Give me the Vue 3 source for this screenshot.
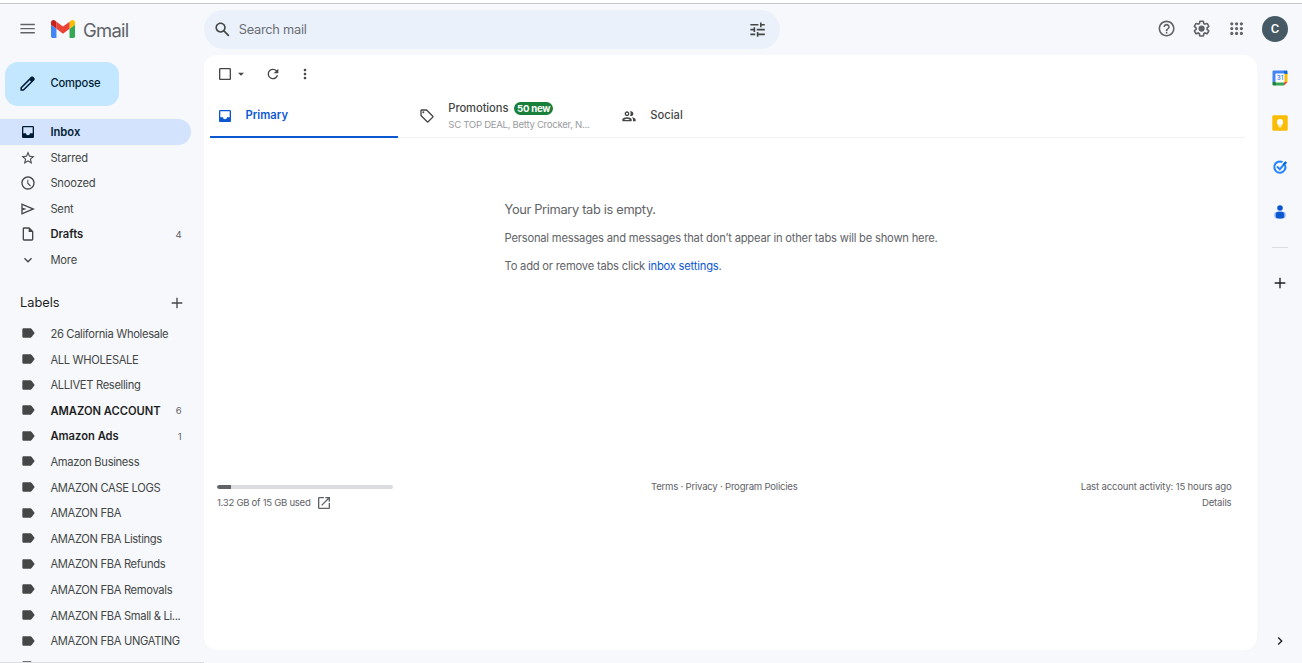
<script setup>
const icons = {
  menu: 'M3 18h18v-1.7H3v1.7zm0-5.2h18v-1.6H3v1.6zM3 6v1.7h18V6H3z',
  pencil: 'M20.41 4.94l-1.35-1.35c-.78-.78-2.05-.78-2.83 0L3 16.82V21h4.18L20.41 7.77c.79-.78.79-2.05 0-2.83zm-14 14.12L5 19v-1.36l9.82-9.82 1.41 1.41-9.82 9.83z',
  inbox: 'M19 3H5c-1.1 0-2 .9-2 2v14c0 1.1.9 2 2 2h14c1.1 0 2-.9 2-2V5c0-1.1-.9-2-2-2zm0 11h-4c0 1.66-1.35 3-3 3s-3-1.34-3-3H5V5h14v9z',
  star: 'M22 9.24l-7.19-.62L12 2 9.19 8.63 2 9.24l5.46 4.73L5.82 21 12 17.27 18.18 21l-1.63-7.03L22 9.24zM12 15.4l-3.76 2.27 1-4.28-3.32-2.88 4.38-.38L12 6.1l1.71 4.04 4.38.38-3.32 2.88 1 4.28L12 15.4z',
  clock: 'M11.99 2C6.47 2 2 6.48 2 12s4.47 10 9.99 10C17.52 22 22 17.52 22 12S17.52 2 11.99 2zM12 20c-4.42 0-8-3.58-8-8s3.58-8 8-8 8 3.58 8 8-3.58 8-8 8zm.5-13H11v6l4.3 4.2 1.2-1.2-4-4V7z',
  send: 'M2 3.5v17L22.5 12 2 3.5zm2 3L17.2 12 4 17.5v-3.7l6-1.8-6-1.8V6.5z',
  draft: 'M14 2H6c-1.1 0-2 .9-2 2v16c0 1.1.9 2 2 2h12c1.1 0 2-.9 2-2V8l-6-6zM6 20V4h7v5h5v11H6z',
  more: 'M16.59 8.59L12 13.17 7.41 8.59 6 10l6 6 6-6z',
  label: 'M3.5 17.8c0 .8.6 1.2 1.5 1.2h10.5c.8 0 1.5-.4 2-1.1L22 12l-4.5-5.9c-.5-.7-1.2-1.1-2-1.1H5c-.9 0-1.5.4-1.5 1.2v11.6z',
  plus: 'M20 13h-7v7h-2v-7H4v-2h7V4h2v7h7v2z',
  search: 'M20.49 19l-5.73-5.73C15.53 12.2 16 10.91 16 9.5 16 5.91 13.09 3 9.5 3S3 5.91 3 9.5 5.91 16 9.5 16c1.41 0 2.7-.47 3.77-1.24L19 20.49 20.49 19zM5 9.5C5 7.01 7.01 5 9.5 5S14 7.01 14 9.5 11.99 14 9.5 14 5 11.99 5 9.5z',
  tune: 'M3 17v2h6v-2H3zM3 5v2h10V5H3zm10 16v-2h8v-2h-8v-2h-2v6h2zM7 9v2H3v2h4v2h2V9H7zm14 4v-2H11v2h10zm-6-4h2V7h4V5h-4V3h-2v6z',
  help: 'M11 18h2v-2h-2v2zm1-16C6.48 2 2 6.48 2 12s4.48 10 10 10 10-4.48 10-10S17.52 2 12 2zm0 18c-4.41 0-8-3.59-8-8s3.59-8 8-8 8 3.59 8 8-3.59 8-8 8zm0-14c-2.21 0-4 1.79-4 4h2c0-1.1.9-2 2-2s2 .9 2 2c0 2-3 1.75-3 5h2c0-2.25 3-2.5 3-5 0-2.21-1.79-4-4-4z',
  gear: 'M13.85 22.25h-3.7c-.74 0-1.36-.54-1.45-1.27l-.27-1.89c-.27-.14-.53-.29-.79-.46l-1.8.72c-.7.26-1.47-.03-1.81-.65L2.2 15.53c-.35-.66-.2-1.44.36-1.88l1.53-1.19c-.01-.15-.02-.3-.02-.46 0-.15.01-.31.02-.46l-1.52-1.19c-.59-.45-.74-1.26-.37-1.88l1.85-3.19c.34-.62 1.11-.9 1.79-.63l1.81.73c.26-.17.52-.32.78-.46l.27-1.91c.09-.7.71-1.25 1.44-1.25h3.7c.74 0 1.36.54 1.45 1.27l.27 1.89c.27.14.53.29.79.46l1.8-.72c.71-.26 1.48.03 1.82.65l1.84 3.18c.36.66.2 1.44-.36 1.88l-1.52 1.19c.01.15.02.3.02.46s-.01.31-.02.46l1.52 1.19c.56.45.72 1.23.37 1.86l-1.86 3.22c-.34.62-1.11.9-1.8.63l-1.8-.72c-.26.17-.52.32-.78.46l-.27 1.91c-.1.68-.72 1.22-1.46 1.22zm-3.23-2h2.76l.37-2.55.53-.22c.44-.18.88-.44 1.34-.78l.45-.34 2.38.96 1.38-2.4-2.03-1.58.07-.56c.03-.26.06-.51.06-.78s-.03-.53-.06-.78l-.07-.56 2.03-1.58-1.39-2.4-2.39.96-.45-.35c-.42-.32-.87-.58-1.33-.77l-.52-.22-.37-2.55h-2.76l-.37 2.55-.53.21c-.44.19-.88.44-1.34.79l-.45.33-2.38-.95-1.39 2.39 2.03 1.58-.07.56a7 7 0 0 0-.06.79c0 .26.02.53.06.78l.07.56-2.03 1.58 1.38 2.4 2.39-.96.45.35c.43.33.86.58 1.33.77l.53.22.38 2.55z M15.9 12a3.9 3.9 0 1 1-7.8 0 3.9 3.9 0 0 1 7.8 0z',
  apps: 'M6 8c1.1 0 2-.9 2-2s-.9-2-2-2-2 .9-2 2 .9 2 2 2zm6 12c1.1 0 2-.9 2-2s-.9-2-2-2-2 .9-2 2 .9 2 2 2zm-6 0c1.1 0 2-.9 2-2s-.9-2-2-2-2 .9-2 2 .9 2 2 2zm0-6c1.1 0 2-.9 2-2s-.9-2-2-2-2 .9-2 2 .9 2 2 2zm6 0c1.1 0 2-.9 2-2s-.9-2-2-2-2 .9-2 2 .9 2 2 2zm4-8c0 1.1.9 2 2 2s2-.9 2-2-.9-2-2-2-2 .9-2 2zm-4 2c1.1 0 2-.9 2-2s-.9-2-2-2-2 .9-2 2 .9 2 2 2zm6 6c1.1 0 2-.9 2-2s-.9-2-2-2-2 .9-2 2 .9 2 2 2zm0 6c1.1 0 2-.9 2-2s-.9-2-2-2-2 .9-2 2 .9 2 2 2z',
  checkbox: 'M19 5v14H5V5h14m0-2H5c-1.1 0-2 .9-2 2v14c0 1.1.9 2 2 2h14c1.1 0 2-.9 2-2V5c0-1.1-.9-2-2-2z',
  caret: 'M7.5 10l4.5 4.5 4.5-4.5z',
  refresh: 'M17.65 6.35A7.96 7.96 0 0 0 12 4a8 8 0 1 0 7.73 10h-2.08A6 6 0 1 1 12 6c1.66 0 3.14.69 4.22 1.78L13 11h7V4l-2.35 2.35z',
  dots: 'M12 8c1.1 0 2-.9 2-2s-.9-2-2-2-2 .9-2 2 .9 2 2 2zm0 2c-1.1 0-2 .9-2 2s.9 2 2 2 2-.9 2-2-.9-2-2-2zm0 6c-1.1 0-2 .9-2 2s.9 2 2 2 2-.9 2-2-.9-2-2-2z',
  tag: 'M21.41 11.58l-9-9C12.05 2.22 11.55 2 11 2H4c-1.1 0-2 .9-2 2v7c0 .55.22 1.05.59 1.42l9 9c.36.36.86.58 1.41.58s1.05-.22 1.41-.59l7-7c.37-.36.59-.86.59-1.41s-.23-1.06-.59-1.42zM13 20.01L4 11V4h7v-.01l9 9-7 7.02zM8 6.5A1.5 1.5 0 1 1 5 6.5 1.5 1.5 0 0 1 8 6.5z',
  people: 'M9 13.75c-2.34 0-7 1.17-7 3.5V20h14v-2.75c0-2.33-4.66-3.5-7-3.5zM4.34 18c.84-.8 2.87-2 4.66-2s3.82 1.2 4.66 2H4.34zM9 12c1.93 0 3.5-1.57 3.5-3.5S10.93 5 9 5 5.5 6.57 5.5 8.5 7.07 12 9 12zm0-5c.83 0 1.5.67 1.5 1.5S9.83 10 9 10s-1.5-.67-1.5-1.5S8.17 7 9 7zm7.04 6.81c1.16.84 1.96 1.96 1.96 3.44V20h4v-2.75c0-2.02-3.5-3.17-5.96-3.44zM15 12c1.93 0 3.5-1.57 3.5-3.5S16.93 5 15 5c-.54 0-1.04.13-1.5.35.63.89 1 1.98 1 3.15s-.37 2.26-1 3.15c.46.22.96.35 1.5.35z',
  open: 'M19 19H5V5h7V3H5a2 2 0 0 0-2 2v14a2 2 0 0 0 2 2h14c1.1 0 2-.9 2-2v-7h-2v7zM14 3v2h3.59l-9.83 9.83 1.41 1.41L19 6.41V10h2V3h-7z',
  chevron: 'M10 6L8.59 7.41 13.17 12l-4.58 4.59L10 18l6-6z',
}

const folders = [
  { name: 'Inbox', icon: 'inbox', kind: 'active' },
  { name: 'Starred', icon: 'star' },
  { name: 'Snoozed', icon: 'clock' },
  { name: 'Sent', icon: 'send' },
  { name: 'Drafts', icon: 'draft', kind: 'unread', count: 4 },
  { name: 'More', icon: 'more' },
]

const labels = [
  { name: '26 California Wholesale' },
  { name: 'ALL WHOLESALE' },
  { name: 'ALLIVET Reselling' },
  { name: 'AMAZON ACCOUNT', kind: 'unread', count: 6 },
  { name: 'Amazon Ads', kind: 'unread', count: 1 },
  { name: 'Amazon Business' },
  { name: 'AMAZON CASE LOGS' },
  { name: 'AMAZON FBA' },
  { name: 'AMAZON FBA Listings' },
  { name: 'AMAZON FBA Refunds' },
  { name: 'AMAZON FBA Removals' },
  { name: 'AMAZON FBA Small & Li...' },
  { name: 'AMAZON FBA UNGATING' },
  { name: 'Amazon Seller' },
]
</script>

<template>
  <div class="page">
    <header class="header">
      <div class="brand">
        <svg class="menu" viewBox="0 0 24 24"><path :d="icons.menu" /></svg>
        <svg class="logo" viewBox="52 42 88 66">
          <path fill="#4285f4" d="M58 108h14V74L52 59v43c0 3.32 2.69 6 6 6" />
          <path fill="#34a853" d="M120 108h14c3.32 0 6-2.69 6-6V59l-20 15" />
          <path fill="#fbbc04" d="M120 48v26l20-15v-8c0-7.42-8.47-11.65-14.4-7.2" />
          <path fill="#ea4335" d="M72 74V48l24 18 24-18v26L96 92" />
          <path fill="#c5221f" d="M52 51v8l20 15V48l-5.6-4.2c-5.94-4.45-14.4-.22-14.4 7.2" />
        </svg>
        <span class="wordmark">Gmail</span>
      </div>
      <div class="search">
        <svg class="i19" viewBox="0 0 24 24"><path :d="icons.search" /></svg>
        <span class="placeholder">Search mail</span>
        <svg class="i19" viewBox="0 0 24 24"><path :d="icons.tune" /></svg>
      </div>
      <div class="account">
        <svg class="i19" viewBox="0 0 24 24"><path :d="icons.help" /></svg>
        <svg class="i19" viewBox="0 0 24 24"><path :d="icons.gear" /></svg>
        <svg class="i19" viewBox="0 0 24 24"><path :d="icons.apps" /></svg>
        <div class="avatar">C</div>
      </div>
    </header>

    <div class="body">
      <nav class="sidebar">
        <button class="compose">
          <svg class="i19" viewBox="0 0 24 24"><path :d="icons.pencil" /></svg>
          <span>Compose</span>
        </button>
        <div v-for="f in folders" :key="f.name" class="row" :class="f.kind">
          <svg class="i16" viewBox="0 0 24 24"><path :d="icons[f.icon]" /></svg>
          <span class="name">{{ f.name }}</span>
          <span v-if="f.count" class="count">{{ f.count }}</span>
        </div>
        <div class="labels-head">
          <span>Labels</span>
          <svg class="i16" viewBox="0 0 24 24"><path :d="icons.plus" /></svg>
        </div>
        <div v-for="l in labels" :key="l.name" class="row label" :class="l.kind">
          <svg class="i16" viewBox="0 0 24 24"><path :d="icons.label" /></svg>
          <span class="name">{{ l.name }}</span>
          <span v-if="l.count" class="count">{{ l.count }}</span>
        </div>
      </nav>

      <main class="panel">
        <div class="toolbar">
          <svg class="i16" viewBox="0 0 24 24"><path :d="icons.checkbox" /></svg>
          <svg class="i16 caret" viewBox="0 0 24 24"><path :d="icons.caret" /></svg>
          <svg class="i16 refresh" viewBox="0 0 24 24"><path :d="icons.refresh" /></svg>
          <svg class="i16 dots" viewBox="0 0 24 24"><path :d="icons.dots" /></svg>
        </div>
        <div class="tabs">
          <div class="tab primary">
            <svg class="i16" viewBox="0 0 24 24"><path :d="icons.inbox" /></svg>
            <span class="title">Primary</span>
          </div>
          <div class="tab promos">
            <svg class="i16" viewBox="0 0 24 24"><path :d="icons.tag" /></svg>
            <div class="stack">
              <div class="line"><span class="title">Promotions</span><span class="badge">50 new</span></div>
              <div class="senders">SC TOP DEAL, Betty Crocker, N...</div>
            </div>
          </div>
          <div class="tab social">
            <svg class="i16" viewBox="0 0 24 24"><path :d="icons.people" /></svg>
            <span class="title">Social</span>
          </div>
        </div>
        <section class="empty">
          <h2>Your Primary tab is empty.</h2>
          <p>Personal messages and messages that don’t appear in other tabs will be shown here.</p>
          <p>To add or remove tabs click <a>inbox settings</a>.</p>
        </section>
        <footer class="footer">
          <div>
            <div class="meter"><div class="used"></div></div>
            <div class="quota"><span>1.32 GB of 15 GB used</span><svg class="i16" viewBox="0 0 24 24"><path :d="icons.open" /></svg></div>
          </div>
          <div class="legal">Terms · Privacy · Program Policies</div>
          <div class="activity"><div>Last account activity: 15 hours ago</div><div>Details</div></div>
        </footer>
      </main>

      <aside class="rail">
        <svg class="app" viewBox="0 0 16 16">
          <path fill="#4285f4" d="M1.5.5H12V4H4v8H.5V1.5a1 1 0 0 1 1-1z" />
          <path fill="#1967d2" d="M12 .5h2.5a1 1 0 0 1 1 1V4H12z" />
          <path fill="#fbbc04" d="M12 4h3.5v8H12z" />
          <path fill="#34a853" d="M4 12h8v3.5H4z" />
          <path fill="#188038" d="M.5 12H4v3.5H1.5a1 1 0 0 1-1-1z" />
          <path fill="#ea4335" d="M12 12h3.5L12 15.5z" />
          <path fill="#fff" d="M3.5 3.5h9v9h-9z" />
          <text x="8" y="10.4" text-anchor="middle" fill="#4285f4" font-size="6.3" font-weight="600">31</text>
        </svg>
        <svg class="app" viewBox="0 0 16 16">
          <rect x=".3" y=".3" width="15.4" height="15.4" rx="1.4" fill="#fbbc04" />
          <circle cx="8" cy="7.2" r="3.1" fill="#fff" />
          <path fill="#fff" d="M6.4 8h3.2v2.6H6.4zM6.4 11.3h3.2v1H6.4z" />
        </svg>
        <svg class="app" viewBox="0 0 16 16">
          <path d="M13.1 6a5.6 5.6 0 1 1-2.6-2.9" fill="none" stroke="#2684fc" stroke-width="2" />
          <path d="M5 7.6l2.8 2.6 6.2-7" fill="none" stroke="#2684fc" stroke-width="2" />
          <path d="M11.4 6l2.7-3" fill="none" stroke="#0066da" stroke-width="2.3" />
        </svg>
        <svg class="app" viewBox="0 0 16 16">
          <circle cx="8" cy="4" r="2.8" fill="#0b57d0" />
          <rect x="2.4" y="7.8" width="11.2" height="6.8" rx="3" fill="#7baaf7" />
          <rect x="4" y="7.8" width="8" height="6.8" rx="2.4" fill="#0b57d0" />
        </svg>
        <div class="divider"></div>
        <svg class="app add" viewBox="0 0 24 24"><path :d="icons.plus" /></svg>
        <svg class="app collapse" viewBox="0 0 24 24"><path :d="icons.chevron" /></svg>
      </aside>
    </div>
  </div>
</template>

<style>
body { margin: 0; background: #f6f8fc; }
</style>

<style scoped>
.page {
  box-sizing: border-box;
  width: 1302px;
  height: 663px;
  overflow: hidden;
  display: flex;
  flex-direction: column;
  border-top: 3px solid #fff;
  background: #f6f8fc;
  color: #444746;
  font: 11.2px/1 Inter, "Liberation Sans", sans-serif;
}
svg { display: block; flex: none; fill: currentColor; }
.i16 { width: 16px; height: 16px; }
.i19 { width: 19.2px; height: 19.2px; }

.header {
  box-sizing: border-box;
  height: 52px;
  flex: none;
  border-top: 1px solid #c7c8cc;
  display: flex;
  align-items: center;
}
.brand { width: 204px; padding-bottom: 1px; display: flex; align-items: center; color: #5f6368; }
.menu { width: 19.2px; height: 19.2px; margin-left: 17.8px; }
.logo { width: 24px; height: 18px; margin-left: 14px; }
.wordmark { margin-left: 8px; font-size: 18.4px; letter-spacing: -0.7px; padding-top: 2px; }
.search {
  box-sizing: border-box;
  width: 576px;
  height: 39px;
  border-radius: 20px;
  padding: 0 13px 0 9px;
  background: #eaf1fb;
  display: flex;
  align-items: center;
}
.placeholder { flex: 1; margin-left: 6.5px; padding-top: 2px; font-size: 12.8px; letter-spacing: -0.25px; color: #6a6e73; }
.account { margin-left: auto; padding: 0 14px 1px 0; display: flex; align-items: center; gap: 15.8px; color: #5f6368; }
.avatar {
  width: 26px;
  height: 26px;
  border-radius: 50%;
  background: #455a64;
  color: #fff;
  font: 500 13px/26px Roboto, sans-serif;
  text-align: center;
}

.body { flex: 1; min-height: 0; display: flex; }
.sidebar {
  box-sizing: border-box;
  width: 204px;
  height: 608px;
  overflow: hidden;
  padding-top: 7px;
  border-bottom: 1px solid #dcdde3;
}
.compose {
  width: 114px;
  height: 44px;
  margin: 0 0 13.2px 5px;
  padding: 0 0 0 13px;
  border: 0;
  border-radius: 13px;
  background: #c2e7ff;
  color: #001d35;
  display: flex;
  align-items: center;
  gap: 13.2px;
  font: 500 11.2px/1 Inter, sans-serif;
  letter-spacing: -0.15px;
}
.row {
  box-sizing: border-box;
  width: 191px;
  height: 25.6px;
  padding: 0 9.4px 0 20px;
  border-radius: 0 13px 13px 0;
  display: flex;
  align-items: center;
}
.name { flex: 1; margin-left: 14.4px; padding-top: 1.4px; white-space: nowrap; letter-spacing: -0.2px; }
.label .name { letter-spacing: -0.33px; }
.label svg { margin-top: -1px; }
.count { font-size: 9.6px; color: #5f6368; }
.active { background: #d3e3fd; color: #001d35; }
.active .name { font-weight: 600; letter-spacing: 0; }
.unread .name { font-weight: 600; letter-spacing: 0; color: #1f1f1f; }
.labels-head {
  box-sizing: border-box;
  height: 48.4px;
  padding: 12px 19px 0 20px;
  display: flex;
  align-items: center;
  justify-content: space-between;
  font-size: 12.8px;
  color: #1f1f1f;
}
.labels-head svg { color: #444746; }

.panel {
  width: 1053px;
  height: 595px;
  border-radius: 13px;
  background: #fff;
}
.toolbar { height: 38px; padding-left: 13px; display: flex; align-items: center; }
.refresh { margin-left: 16px; }
.dots { margin-left: 16px; }
.tabs {
  box-sizing: border-box;
  height: 45px;
  margin: 0 12px 0 6px;
  border-bottom: 1px solid #f0f1f2;
  display: flex;
}
.tab { box-sizing: border-box; height: 45px; display: flex; align-items: center; padding-left: 7px; gap: 13.3px; }
.title { font-weight: 500; }
.primary { width: 188px; gap: 12.6px; color: #0b57d0; border-bottom: 2px solid #0b57d0; padding-top: 2px; }
.primary .title { font-weight: 600; }
.promos { margin-left: 14px; width: 202px; }
.line { display: flex; align-items: center; gap: 5.5px; height: 14px; }
.promos .title { letter-spacing: -0.08px; }
.badge { padding: 0 3.2px; height: 13px; line-height: 13px; border-radius: 7px; background: #188038; color: #fff; font-size: 9.6px; font-weight: 700; letter-spacing: -0.25px; }
.senders { margin-top: 4px; font-size: 9.6px; letter-spacing: -0.3px; color: #9a9c9f; white-space: nowrap; }

.empty { height: 341px; padding: 65px 0 0 300.5px; box-sizing: border-box; color: #5f6368; }
h2 { margin: 0 0 16px; font-size: 12.8px; line-height: 13px; font-weight: 400; letter-spacing: -0.32px; }
p { margin: 0 0 16px; line-height: 12px; letter-spacing: -0.21px; }
a { color: #0b57d0; }

.footer { display: grid; grid-template-columns: 1fr auto 1fr; padding: 0 25.5px 0 13px; font-size: 9.6px; line-height: 16px; letter-spacing: -0.23px; color: #5f6368; }
.meter { width: 176px; height: 4px; margin-top: 6px; border-radius: 2px; background: #dadce0; overflow: hidden; }
.used { width: 14px; height: 4px; border-radius: 2px 0 0 2px; background: #5f6368; }
.quota { display: flex; align-items: center; gap: 5.5px; height: 16px; margin-top: 5.5px; letter-spacing: -0.3px; }
.quota span { padding-top: 1px; }
.activity { text-align: right; letter-spacing: -0.18px; }

.rail { flex: 1; display: flex; flex-direction: column; align-items: center; padding-top: 15px; }
.app { width: 16px; height: 16px; margin-bottom: 28.5px; }
.divider { width: 16px; height: 1px; background: #dadce0; margin: -1px 0 27px; }
.add { color: #1f1f1f; }
.collapse { margin: auto 0 14px; color: #1f1f1f; }
</style>
